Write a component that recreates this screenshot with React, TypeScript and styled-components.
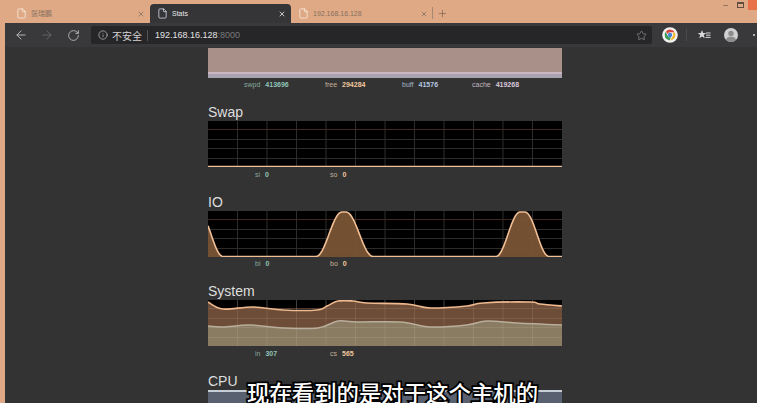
import { ArrowLeft, ArrowRight, File, Info, Minus, Plus, RotateCw, Star, X } from "lucide-react";
import styled, { createGlobalStyle } from "styled-components";

type Point = [number, number];

const CHART_WIDTH = 354;
const CHART_HEIGHT = 46;

// 0..1 hump, flat on top between peakFrom and peakTo
const hump = (x: number, start: number, peakFrom: number, peakTo: number, end: number) => {
  if (x <= start || x >= end) return 0;
  if (x >= peakFrom && x <= peakTo) return 1;
  const t = x < peakFrom ? (peakFrom - x) / (peakFrom - start) : (x - peakTo) / (end - peakTo);
  return 0.5 + 0.5 * Math.cos(Math.PI * t);
};

const ioLine: Point[] = Array.from({ length: 178 }, (_, i) => {
  const x = i * 2;
  const h = Math.max(hump(x, -33, -9, -9, 15), hump(x, 108, 134, 138, 165), hump(x, 288, 312, 317, 341));
  return [Math.min(x, CHART_WIDTH), 45.5 - 44.5 * h] as Point;
});

const systemUpper: Point[] = [
  [0, 2], [15, 9], [45, 7], [75, 10], [109, 10], [119, 6], [130, 1], [145, 1], [159, 3], [199, 4],
  [222, 8], [259, 6], [275, 3], [322, 2], [332, 4], [354, 6],
];

const systemLower: Point[] = [
  [0, 26], [15, 27], [42, 25], [75, 28], [110, 28], [130, 21], [149, 22], [192, 22], [222, 27], [259, 25],
  [279, 21], [309, 23], [354, 25],
];

// catmull-rom through the samples, gives the same soft curve as the graphs
const smooth = (pts: Point[]) => {
  let d = `M${pts[0][0]} ${pts[0][1]}`;
  for (let i = 0; i < pts.length - 1; i++) {
    const p0 = pts[Math.max(i - 1, 0)];
    const p1 = pts[i];
    const p2 = pts[i + 1];
    const p3 = pts[Math.min(i + 2, pts.length - 1)];
    const c1x = p1[0] + (p2[0] - p0[0]) / 6;
    const c1y = p1[1] + (p2[1] - p0[1]) / 6;
    const c2x = p2[0] - (p3[0] - p1[0]) / 6;
    const c2y = p2[1] - (p3[1] - p1[1]) / 6;
    d += ` C${c1x.toFixed(1)} ${c1y.toFixed(1)} ${c2x.toFixed(1)} ${c2y.toFixed(1)} ${p2[0]} ${p2[1]}`;
  }
  return d;
};

const area = (pts: Point[]) => `${smooth(pts)} L${CHART_WIDTH} ${CHART_HEIGHT} L0 ${CHART_HEIGHT} Z`;

const Grid = ({ light }: { light?: boolean }) => {
  const stroke = light ? "rgba(255,235,215,0.1)" : "#2e2c2b";
  return (
    <g stroke={stroke} strokeWidth="1">
      {[...Array(11)].map((_, i) => (
        <line key={i} x1={29.5 * (i + 1)} x2={29.5 * (i + 1)} y1="0" y2={CHART_HEIGHT} />
      ))}
      {[8.5, 18.5, 27.5, 37.5].map((y, i) => (
        <line key={y} x1="0" x2={CHART_WIDTH} y1={y} y2={y} stroke={i === 0 && !light ? "#3f281d" : stroke} />
      ))}
    </g>
  );
};

const SwapGraph = () => (
  <ChartSvg viewBox={`0 0 ${CHART_WIDTH} ${CHART_HEIGHT}`}>
    <Grid />
    <line x1="0" x2={CHART_WIDTH} y1="45.5" y2="45.5" stroke="#efc09a" strokeWidth="1.5" />
  </ChartSvg>
);

const IoGraph = () => (
  <ChartSvg viewBox={`0 0 ${CHART_WIDTH} ${CHART_HEIGHT}`}>
    <Grid />
    <path d={area(ioLine)} fill="#7a5435" fillOpacity="0.95" />
    <path d={smooth(ioLine)} fill="none" stroke="#f0bf96" strokeWidth="1.6" />
  </ChartSvg>
);

const SystemGraph = () => (
  <ChartSvg viewBox={`0 0 ${CHART_WIDTH} ${CHART_HEIGHT}`}>
    <Grid />
    <path d={area(systemUpper)} fill="#6e4d38" />
    <path d={area(systemLower)} fill="#8a7b63" />
    <Grid light />
    <path d={smooth(systemLower)} fill="none" stroke="#b8ae9b" strokeWidth="1.5" />
    <path d={smooth(systemUpper)} fill="none" stroke="#efb98f" strokeWidth="1.6" />
  </ChartSvg>
);

const ChromeLogo = () => (
  <svg width="16" height="16" viewBox="0 0 16 16">
    <circle cx="8" cy="8" r="7.8" fill="#f4f2f0" />
    <path d="M8 2.6a5.4 5.4 0 0 1 4.7 2.7H8a2.7 2.7 0 0 0-2.5 1.7L3.9 4.4A5.4 5.4 0 0 1 8 2.6Z" fill="#d9483b" />
    <path d="M12.9 5.8a5.4 5.4 0 0 1-4.5 7.6l2-3.7a2.7 2.7 0 0 0 .1-3.9Z" fill="#f0b429" />
    <path d="M7.6 13.4a5.4 5.4 0 0 1-4-8.6l2 3.9a2.7 2.7 0 0 0 3.4 1.4Z" fill="#3b9a57" />
    <circle cx="8" cy="8" r="2.2" fill="#4a86d8" />
  </svg>
);

const ReadingList = () => (
  <svg width="14" height="12" viewBox="0 0 14 12" fill="none">
    <path d="M5 1l1.200 3h3l-2.400 2 .9 3.200L5 7.500 2.300 9.200l.9-3.200L.8 4h3Z" fill="#d8d8d8" />
    <path d="M9 6.200h4.500M8.500 8.400h5M9 4h4.500" stroke="#d8d8d8" strokeWidth="1" />
  </svg>
);

const Avatar = () => (
  <svg width="14" height="14" viewBox="0 0 14 14">
    <circle cx="7" cy="7" r="7" fill="#d0d0d0" />
    <circle cx="7" cy="5.400" r="2.700" fill="#8c8c8c" />
    <path d="M1.800 11.600c1-2.300 3-3.200 5.200-3.200s4.200.9 5.200 3.200A7 7 0 0 1 1.800 11.600Z" fill="#8c8c8c" />
  </svg>
);

const App = () => (
  <Screen>
    <GlobalStyle />
    <TitleBar>
      <Tab>
        <TabIcon><File size={11} strokeWidth={1.6} /></TabIcon>
        <TabTitle>张瑞鹏</TabTitle>
        <TabClose><X size={8} strokeWidth={2.4} /></TabClose>
      </Tab>
      <Tab $active>
        <ActiveFavicon>
          <File size={11} strokeWidth={1.6} />
        </ActiveFavicon>
        <TabTitle>Stats</TabTitle>
        <TabClose><X size={8} strokeWidth={2.4} /></TabClose>
      </Tab>
      <Tab>
        <TabIcon><File size={11} strokeWidth={1.6} /></TabIcon>
        <TabTitle>192.168.16.128</TabTitle>
        <TabClose><X size={8} strokeWidth={2.4} /></TabClose>
      </Tab>
      <TabDivider />
      <NewTab><Plus size={11} strokeWidth={1.5} /></NewTab>
      <WindowControls>
        <Minus size={7} strokeWidth={2} />
        <RestoreBox />
        <CloseBox />
      </WindowControls>
    </TitleBar>

    <Toolbar>
      <NavButton><ArrowLeft size={14} strokeWidth={1.6} /></NavButton>
      <NavButton $disabled><ArrowRight size={14} strokeWidth={1.6} /></NavButton>
      <NavButton><RotateCw size={13} strokeWidth={1.6} /></NavButton>
      <Omnibox>
        <Info size={10} strokeWidth={1.6} />
        <Insecure>不安全</Insecure>
        <OmniDivider />
        <Host>192.168.16.128<Port>:8000</Port></Host>
        <BookmarkStar><Star size={11} strokeWidth={1.6} /></BookmarkStar>
      </Omnibox>
      <ToolIcons>
        <ChromeLogo />
        <ToolDivider />
        <ReadingList />
        <ProfileSlot><Avatar /></ProfileSlot>
        <MenuDot />
      </ToolIcons>
    </Toolbar>

    <Page>
      <Column>
        <Section>
          <MemoryChart>
            <MemoryBand />
          </MemoryChart>
          <Stats>
            <Stat $left={36} $width={81}><Key $c="#86a89c">swpd</Key><Val $c="#8fc4b8">413696</Val></Stat>
            <Stat $width={77}><Key $c="#c4b098">free</Key><Val $c="#f2c79c">294284</Val></Stat>
            <Stat $width={70}><Key $c="#a4b4c8">buff</Key><Val $c="#b4c6e0">41576</Val></Stat>
            <Stat $width={80}><Key $c="#c0b4c0">cache</Key><Val $c="#dcc8dc">419268</Val></Stat>
          </Stats>
        </Section>

        <Section>
          <Heading>Swap</Heading>
          <SwapGraph />
          <Stats>
            <Stat $left={47} $width={75}><Key $c="#86a89c">si</Key><Val $c="#8fc4b8">0</Val></Stat>
            <Stat $width={70}><Key $c="#c4b098">so</Key><Val $c="#f2c79c">0</Val></Stat>
          </Stats>
        </Section>

        <Section>
          <Heading>IO</Heading>
          <IoGraph />
          <Stats>
            <Stat $left={47} $width={75}><Key $c="#86a89c">bi</Key><Val $c="#8fc4b8">0</Val></Stat>
            <Stat $width={70}><Key $c="#c4b098">bo</Key><Val $c="#f2c79c">0</Val></Stat>
          </Stats>
        </Section>

        <Section>
          <Heading>System</Heading>
          <SystemGraph />
          <Stats>
            <Stat $left={47} $width={75}><Key $c="#86a89c">in</Key><Val $c="#8fc4b8">307</Val></Stat>
            <Stat $width={70}><Key $c="#c4b098">cs</Key><Val $c="#f2c79c">565</Val></Stat>
          </Stats>
        </Section>

        <Section>
          <Heading>CPU</Heading>
          <CpuChart />
        </Section>
      </Column>
    </Page>

    <Subtitle>现在看到的是对于这个主机的</Subtitle>
  </Screen>
);

const GlobalStyle = createGlobalStyle`
  html, body {
    margin: 0;
    padding: 0;
    background: #333;
  }
`;

const Screen = styled.div`
  position: relative;
  display: flex;
  flex-direction: column;
  width: 757px;
  height: 403px;
  overflow: hidden;
  background: #dfa985;
  font-family: "Liberation Sans", "Noto Sans CJK SC", sans-serif;
`;

const TitleBar = styled.div`
  display: flex;
  align-items: flex-end;
  flex: none;
  height: 23px;
`;

const Tab = styled.div<{ $active?: boolean }>`
  display: flex;
  align-items: center;
  flex: none;
  box-sizing: border-box;
  width: ${(p) => (p.$active ? 141 : 142)}px;
  height: 19px;
  padding: 0 5px 0 7px;
  border-radius: 4px 4px 0 0;
  background: ${(p) => (p.$active ? "#353538" : "transparent")};
  color: ${(p) => (p.$active ? "#e8e8e8" : "#86705f")};

  &:first-child {
    width: 150px;
    padding-left: 16px;
  }
`;

const TabIcon = styled.span`
  display: flex;
  color: #fbf0e6;
`;

const ActiveFavicon = styled(TabIcon)`
  color: #dfe6f2;
`;

const TabTitle = styled.span`
  margin-left: 4px;
  font-size: 7px;
  line-height: 10px;
  white-space: nowrap;
`;

const TabClose = styled.span`
  display: flex;
  margin-left: auto;
`;

const TabDivider = styled.span`
  flex: none;
  width: 1px;
  height: 12px;
  margin: 0 0 4px -1px;
  background: #a98670;
`;

const NewTab = styled.span`
  display: flex;
  flex: none;
  margin: 0 0 4px 4px;
  color: #7c6252;
`;

const WindowControls = styled.div`
  display: flex;
  align-items: center;
  align-self: flex-start;
  gap: 8px;
  margin-left: auto;
  height: 10px;
  color: #5f4c40;
`;

const RestoreBox = styled.span`
  box-sizing: border-box;
  width: 7px;
  height: 6px;
  border: 1px solid #5f4c40;
  border-top-width: 2px;
`;

const CloseBox = styled.span`
  width: 9px;
  height: 10px;
  margin-left: -4px;
  background: #e8734a;
`;

const Toolbar = styled.div`
  display: flex;
  align-items: center;
  flex: none;
  height: 24px;
  margin-left: 5px;
  padding-left: 3px;
  background: #39393b;
`;

const NavButton = styled.span<{ $disabled?: boolean }>`
  display: flex;
  justify-content: center;
  flex: none;
  width: 26px;
  color: ${(p) => (p.$disabled ? "#666" : "#bdbdbd")};
`;

const Omnibox = styled.div`
  display: flex;
  align-items: center;
  flex: none;
  box-sizing: border-box;
  width: 561px;
  height: 18px;
  margin-left: 5px;
  padding: 0 5px 0 7px;
  background: #262628;
  color: #c8c8c8;
  border-radius: 2px;
`;

const Insecure = styled.span`
  margin-left: 4px;
  font-size: 10px;
  color: #d4d4d4;
`;

const OmniDivider = styled.span`
  width: 1px;
  height: 11px;
  margin: 0 7px 0 5px;
  background: #555;
`;

const Host = styled.span`
  font-size: 9px;
  color: #e2e2e2;
`;

const Port = styled.span`
  color: #7a7a7a;
`;

const BookmarkStar = styled.span`
  display: flex;
  margin-left: auto;
  color: #8c8c8c;
`;

const ToolIcons = styled.div`
  display: flex;
  align-items: center;
  margin-left: 10px;
`;

const ToolDivider = styled.span`
  width: 1px;
  height: 12px;
  margin: 0 10px 0 8px;
  background: #4a4a4a;
`;

const ProfileSlot = styled.span`
  display: flex;
  margin-left: 13px;
`;

const MenuDot = styled.span`
  width: 2px;
  height: 2px;
  margin-left: 15px;
  border-radius: 50%;
  background: #ddd;
`;

const Page = styled.main`
  flex: 1;
  min-height: 0;
  margin-left: 5px;
  padding: 1px 0 0 203px;
  overflow: hidden;
  background: #333;
`;

const Column = styled.div`
  display: flex;
  flex-direction: column;
  gap: 13.5px;
  width: ${CHART_WIDTH}px;
`;

const Section = styled.section`
  display: flex;
  flex-direction: column;
`;

const Heading = styled.h2`
  margin: 0;
  height: 16px;
  font-size: 14px;
  font-weight: 400;
  line-height: 15px;
  color: #dedede;
`;

const ChartSvg = styled.svg`
  display: block;
  width: ${CHART_WIDTH}px;
  height: ${CHART_HEIGHT}px;
  background: #000;
`;

const MemoryChart = styled.div`
  display: flex;
  flex-direction: column;
  justify-content: flex-end;
  height: 29.5px;
  background: #a99089;
`;

const MemoryBand = styled.div`
  box-sizing: border-box;
  height: 6px;
  border-top: 2px solid #c9b6c2;
  background: #a9a0b0;
`;

const CpuChart = styled.div`
  height: 46px;
  border-top: 2px solid #c6ced8;
  background: #596070;
`;

const Stats = styled.div`
  display: flex;
  align-items: center;
  height: 14px;
`;

const Stat = styled.span<{ $left?: number; $width: number }>`
  flex: none;
  box-sizing: content-box;
  width: ${(p) => p.$width}px;
  margin-left: ${(p) => p.$left ?? 0}px;
  font-size: 7px;
  white-space: nowrap;
`;

const Key = styled.span<{ $c: string }>`
  color: ${(p) => p.$c};
`;

const Val = styled.b<{ $c: string }>`
  margin-left: 5px;
  color: ${(p) => p.$c};
`;

const Subtitle = styled.div`
  position: absolute;
  left: 247px;
  top: 381px;
  font-size: 22.4px;
  font-weight: 500;
  line-height: 27px;
  color: #fff;
  white-space: nowrap;
  -webkit-text-stroke: 3.5px #000;
  paint-order: stroke fill;
`;

export default App;
